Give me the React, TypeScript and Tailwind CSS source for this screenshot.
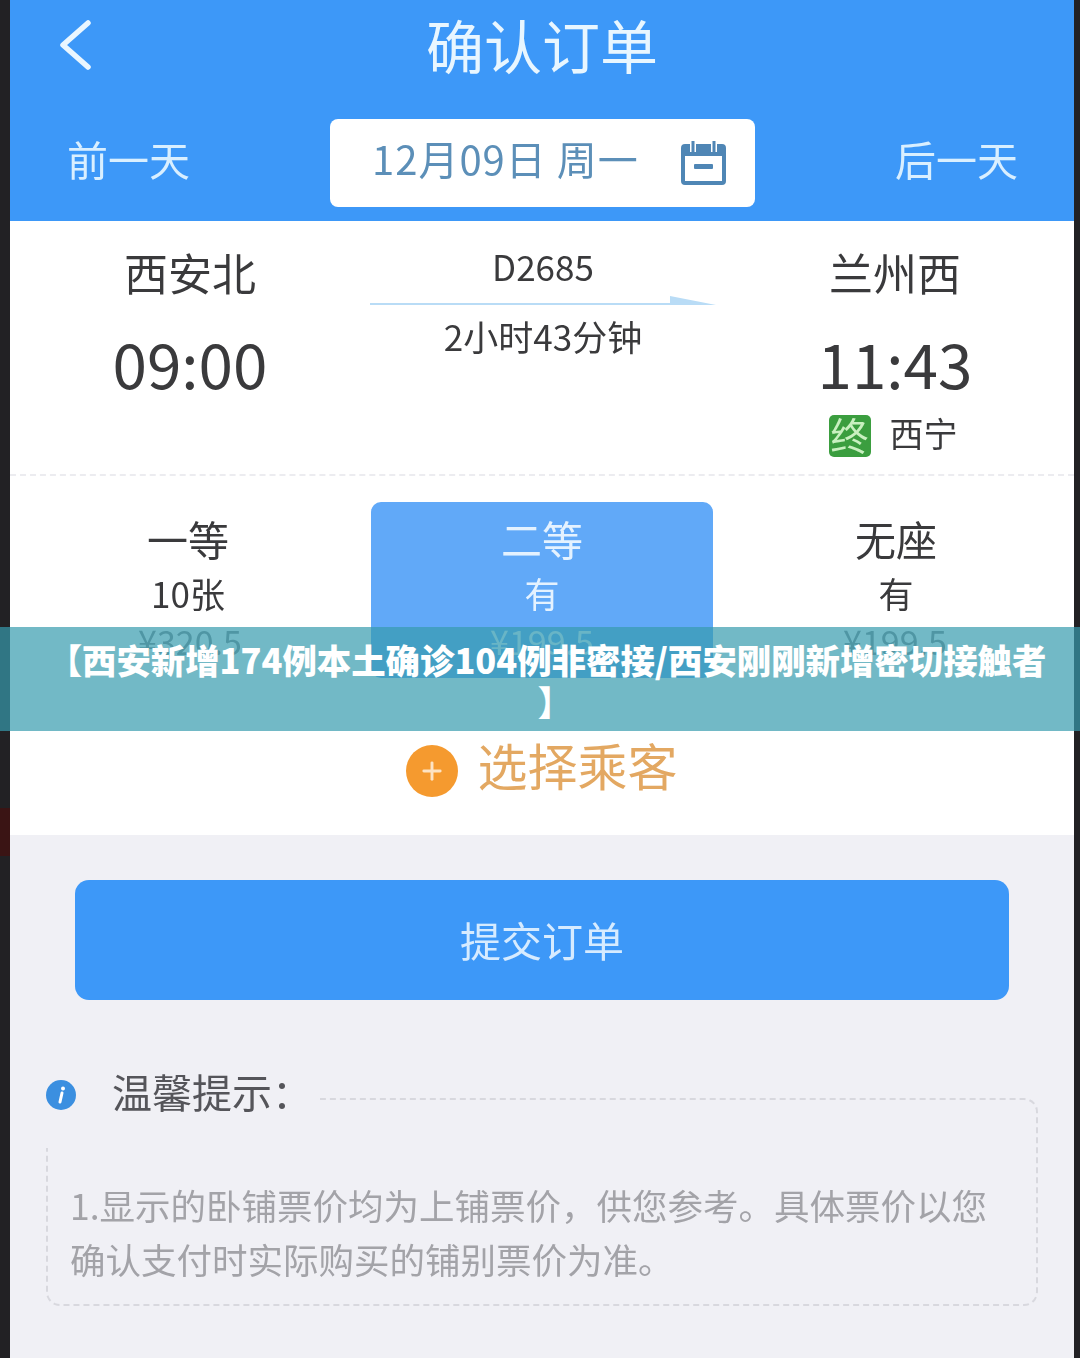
import { Plus } from "lucide-react"

const font = "font-['Noto_Sans_CJK_SC','Noto_Sans',sans-serif]"

const seats = [
  { name: "一等", count: "10张", price: "¥320.5", active: false, shift: "pr-[4px]" },
  { name: "二等", count: "有", price: "¥199.5", active: true, shift: "" },
  { name: "无座", count: "有", price: "¥199.5", active: false, shift: "pl-[2px]" },
]

function BackIcon() {
  return (
    <svg width="36" height="50" viewBox="0 0 36 50" fill="none" className="absolute left-[47px] top-[20px]">
      <path d="M31 3L6 25l25 22" stroke="#eaf6ff" strokeWidth="5.5" strokeLinecap="round" strokeLinejoin="round" />
    </svg>
  )
}

function CalendarIcon() {
  return (
    <svg width="46" height="46" viewBox="0 0 46 46" fill="none">
      <rect x="2" y="6" width="41" height="37" rx="2" stroke="#4f86b5" strokeWidth="4" />
      <rect x="2" y="6" width="41" height="10" fill="#4f86b5" />
      <path d="M12 1v11M33 1v11" stroke="#ffffff" strokeWidth="6" />
      <path d="M12 1v11M33 1v11" stroke="#4f86b5" strokeWidth="3" />
      <rect x="13" y="24" width="19" height="5" rx="1" fill="#4f86b5" />
    </svg>
  )
}

function RouteArrow() {
  return (
    <svg width="346" height="12" viewBox="0 0 346 12" className="my-[7px]">
      <path d="M0 10h346l-46-9v7H0z" fill="#b9dcf6" />
    </svg>
  )
}

function InfoIcon() {
  return (
    <svg width="30" height="30" viewBox="0 0 30 30" className="mt-[14px]">
      <circle cx="15" cy="15" r="15" fill="#3b8fe0" />
      <path d="M16 13l-2 9" stroke="#ffffff" strokeWidth="3" strokeLinecap="round" />
      <circle cx="17" cy="8.5" r="2" fill="#ffffff" />
    </svg>
  )
}

export default function App() {
  return (
    <div className={`relative flex w-[1080px] h-[1358px] overflow-hidden bg-[#222124] ${font}`}>
      {/* dark edge on the left */}
      <div className="w-[10px] shrink-0">
        <div className="mt-[808px] h-[48px] bg-[#3a1414]" />
      </div>

      <div className="w-[1064px] shrink-0 bg-[#f0f0f5] blur-[0.6px]">
        {/* header */}
        <div className="h-[221px] bg-[#3d98f8] text-white">
          <div className="relative flex h-[94px] items-center justify-center pb-[6px]">
            <BackIcon />
            <span className="text-[58px] leading-none text-[#e8f6ff]">确认订单</span>
          </div>
          <div className="mt-[25px] flex items-center">
            <span className="w-[320px] pb-[10px] pl-[57px] text-[41px] leading-none text-[#d9efff]">前一天</span>
            <div className="flex h-[88px] w-[425px] items-center rounded-[8px] bg-white pl-[42px] text-[40px] tracking-[1px] text-[#5c8fb8]">
              <span className="w-[309px] whitespace-nowrap pb-[10px]">12月09日 周一</span>
              <CalendarIcon />
            </div>
            <span className="flex-1 pb-[10px] pl-[140px] text-[41px] leading-none text-[#d9efff]">后一天</span>
          </div>
        </div>

        <div className="h-[614px] bg-white">
          {/* route */}
          <div className="grid h-[255px] grid-cols-[360px_346px_358px] border-b-2 border-dashed border-[#ececf0] text-[#3a3a3c]">
            <div className="flex flex-col items-center pt-[22px]">
              <span className="text-[44px] leading-[58px]">西安北</span>
              <span className="mt-[21px] text-[62px] leading-[80px]">09:00</span>
            </div>
            <div className="flex flex-col items-center pt-[23px]">
              <span className="text-[35px] leading-[44px]">D2685</span>
              <RouteArrow />
              <span className="text-[35px] leading-[44px]">2小时43分钟</span>
            </div>
            <div className="flex flex-col items-center pt-[22px]">
              <span className="text-[44px] leading-[58px]">兰州西</span>
              <span className="mt-[21px] text-[62px] leading-[80px]">11:43</span>
              <div className="mt-[13px] mr-[4px] flex items-center gap-[19px]">
                <span className="flex h-[42px] w-[42px] items-center justify-center rounded-[5px] bg-[#3b9e3f] pb-[4px] text-[38px] leading-none text-[#c9f0c0]">终</span>
                <span className="pb-[6px] text-[34px] leading-none">西宁</span>
              </div>
            </div>
          </div>

          {/* seats */}
          <div className="grid h-[258px] grid-cols-[360px_346px_358px] pt-[26px]">
            {seats.map((seat) => (
              <div
                key={seat.name}
                className={`flex h-[176px] flex-col items-center rounded-[10px] pt-[9px] ${seat.active ? "mr-[3px] ml-[1px] bg-[#61a9f8] text-[#e4f2ff]" : "text-[#3a3a3c]"}`}
              >
                <span className={`text-[41px] leading-[54px] ${seat.shift}`}>{seat.name}</span>
                <span className={`text-[35px] leading-[56px] ${seat.shift}`}>{seat.count}</span>
                <span className={`text-[34px] leading-[40px] ${seat.active ? "text-[#dff0ff]" : "text-[#8a8a8e]"}`}>{seat.price}</span>
              </div>
            ))}
          </div>

          {/* add passenger */}
          <div className="flex items-start justify-center gap-[20px] pr-[1px]">
            <span className="mt-[11px] flex h-[52px] w-[52px] items-center justify-center rounded-full bg-[#f59a2f]">
              <Plus size={28} strokeWidth={2.5} className="text-[#fde3c4]" />
            </span>
            <span className="mt-[-3px] text-[50px] leading-[66px] text-[#e3a862]">选择乘客</span>
          </div>
        </div>

        {/* submit */}
        <div className="mx-[65px] mt-[45px] flex h-[120px] w-[934px] items-center justify-center rounded-[14px] bg-[#3d98f8] text-[41px] text-[#d6ebff]">
          提交订单
        </div>

        {/* tips */}
        <div className="mt-[66px] pl-[36px]">
          <div className="relative z-10 flex h-[82px] w-fit items-start gap-[36px] bg-[#f0f0f5] pr-[8px]">
            <InfoIcon />
            <span className="text-[40px] leading-[50px] text-[#55555a]">温馨提示：</span>
          </div>
          <div className="mt-[-50px] h-[208px] w-[992px] rounded-[14px] border-2 border-dashed border-[#d8d8de] pl-[22px] pt-[78px] text-[35.5px] leading-[54px] text-[#a3a3a8]">
            <div className="whitespace-nowrap">1.显示的卧铺票价均为上铺票价，供您参考。具体票价以您</div>
            <div className="whitespace-nowrap">确认支付时实际购买的铺别票价为准。</div>
          </div>
        </div>
      </div>

      {/* title banner over the page */}
      <div className="absolute left-0 top-[627px] flex h-[104px] w-[1080px] flex-col items-center bg-[#369bae]/70 pl-[14px] pt-[11px] text-[34.4px] font-black leading-[42px] text-white">
        <div className="whitespace-nowrap">【西安新增174例本土确诊104例非密接/西安刚刚新增密切接触者</div>
        <div className="ml-[16px]">】</div>
      </div>
    </div>
  )
}
